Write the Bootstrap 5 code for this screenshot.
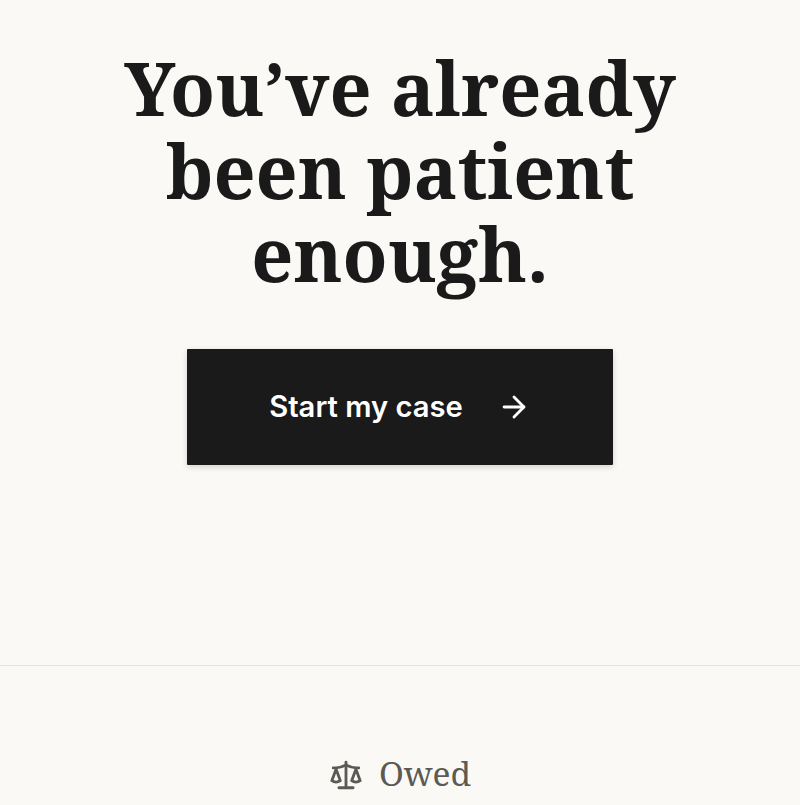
<!DOCTYPE html>
<html lang="en">
<head>
<meta charset="utf-8">
<title>Owed</title>
<link href="https://cdn.jsdelivr.net/npm/bootstrap@5.3.0/dist/css/bootstrap.min.css" rel="stylesheet">
<style>
html,body{height:805px;overflow:hidden}
body{background:#faf9f6;color:#1a1a1a}
.hero-zone{height:665px;padding-top:46px}
.hero-title{font-family:"Noto Serif","DejaVu Serif","Liberation Serif",serif;font-weight:700;font-size:73.6px;line-height:83px;color:#1a1a1a;width:640px;margin:0 auto 54px}
.cta-main{width:426px;height:116px;border:0;border-radius:1px;background:#1a1a1a;color:#fff;font-family:Inter,sans-serif;font-weight:600;font-size:29.2px;gap:34px;box-shadow:0 2px 6px rgba(0,0,0,.16)}
.cta-main:hover{background:#1a1a1a;color:#fff}
.foot-zone{border-top:1px solid #e5e4df;padding-top:85px}
.brand-word{font-family:"Noto Serif","DejaVu Serif","Liberation Serif",serif;font-size:33.5px;line-height:44px;color:#5c5a54}
</style>
</head>
<body>
<main class="hero-zone text-center">
<h1 class="hero-title">You’ve already been patient enough.</h1>
<a href="#" class="cta-main btn d-inline-flex align-items-center justify-content-center">Start my case
<svg width="34" height="34" viewBox="0 0 24 24" fill="none" stroke="#fff" stroke-width="2" stroke-linecap="round" stroke-linejoin="round"><path d="M5 12h14"/><path d="m12 5 7 7-7 7"/></svg></a>
</main>
<footer class="foot-zone d-flex justify-content-center align-items-center gap-3">
<svg class="mt-1" width="34" height="34" viewBox="0 0 24 24" fill="none" stroke="#5c5a54" stroke-width="2" stroke-linecap="round" stroke-linejoin="round"><path d="m16 16 3-8 3 8c-.87.65-1.92 1-3 1s-2.13-.35-3-1Z"/><path d="m2 16 3-8 3 8c-.87.65-1.92 1-3 1s-2.13-.35-3-1Z"/><path d="M7 21h10"/><path d="M12 3v18"/><path d="M3 7h2c2 0 5-1 7-2 2 1 5 2 7 2h2"/></svg>
<span class="brand-word">Owed</span>
</footer>
</body>
</html>
